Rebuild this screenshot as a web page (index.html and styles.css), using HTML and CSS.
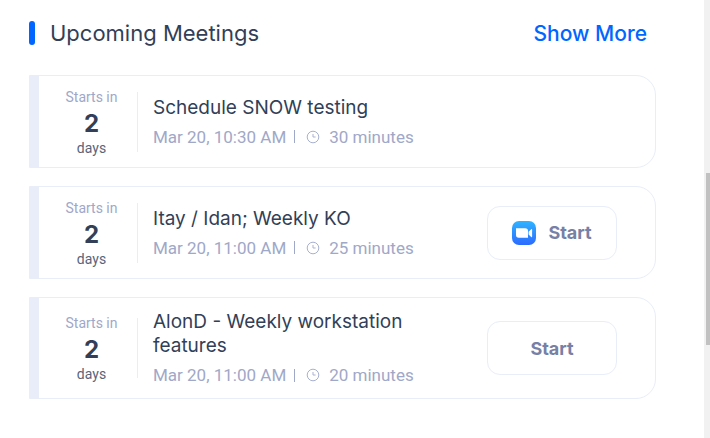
FILE: index.html
```html
<!DOCTYPE html>
<html lang="en">
<head>
  <meta charset="UTF-8">
  <meta name="viewport" content="width=device-width, initial-scale=1.0">
  <title>Upcoming Meetings</title>
  <link rel="stylesheet" href="styles.css">
</head>
<body>
  <main class="meetings">
    <header class="meetings-header">
      <h1>Upcoming Meetings</h1>
      <a href="#" class="show-more">Show More</a>
    </header>

    <article class="meeting">
      <div class="countdown">
        <span class="label">Starts in</span>
        <strong>2</strong>
        <span class="unit">days</span>
      </div>
      <div class="info">
        <h2>Schedule SNOW testing</h2>
        <p>
          <span>Mar 20, 10:30 AM</span>
          <i class="separator"></i>
          <svg class="clock" viewBox="0 0 14 14"><circle cx="7" cy="7" r="5.8"/><path d="M7 4v3h2.6"/></svg>
          <span>30 minutes</span>
        </p>
      </div>
    </article>

    <article class="meeting">
      <div class="countdown">
        <span class="label">Starts in</span>
        <strong>2</strong>
        <span class="unit">days</span>
      </div>
      <div class="info">
        <h2>Itay / Idan; Weekly KO</h2>
        <p>
          <span>Mar 20, 11:00 AM</span>
          <i class="separator"></i>
          <svg class="clock" viewBox="0 0 14 14"><circle cx="7" cy="7" r="5.8"/><path d="M7 4v3h2.6"/></svg>
          <span>25 minutes</span>
        </p>
      </div>
      <button type="button" class="start">
        <svg class="zoom" viewBox="0 0 24 24">
          <defs>
            <linearGradient id="zoom-bg" x1="0" y1="0" x2="0" y2="1">
              <stop offset="0" stop-color="#2fb4ff"/>
              <stop offset="1" stop-color="#2b6bff"/>
            </linearGradient>
          </defs>
          <rect width="24" height="24" rx="7" fill="url(#zoom-bg)"/>
          <path fill="#fff" d="M4 7.200h9.200q2.800 0 2.800 2.800v6.800H6.800Q4 16.800 4 14z"/>
          <path fill="#fff" d="M16.600 10.800l2.600-2.500q.9-.7.900.400v6.800q0 1.100-.9.400l-2.600-2.500z"/>
        </svg>
        Start
      </button>
    </article>

    <article class="meeting">
      <div class="countdown">
        <span class="label">Starts in</span>
        <strong>2</strong>
        <span class="unit">days</span>
      </div>
      <div class="info">
        <h2>AlonD - Weekly workstation features</h2>
        <p>
          <span>Mar 20, 11:00 AM</span>
          <i class="separator"></i>
          <svg class="clock" viewBox="0 0 14 14"><circle cx="7" cy="7" r="5.8"/><path d="M7 4v3h2.6"/></svg>
          <span>20 minutes</span>
        </p>
      </div>
      <button type="button" class="start">Start</button>
    </article>
  </main>

  <div class="scrollbar">
    <div class="thumb"></div>
  </div>
</body>
</html>
```
FILE: styles.css
```css
* {
  box-sizing: border-box;
}

body {
  margin: 0;
  min-height: 100vh;
  display: grid;
  grid-template-columns: 1fr 6px;
  background-color: #fff;
  color: #323f57; /* Dark slate text */
  font-family: Inter, "Open Sans", sans-serif;
}

h1,
h2,
p {
  margin: 0;
  font-weight: 400;
}

.meetings {
  display: flex;
  flex-direction: column;
  gap: 18px;
  padding: 16px 48px 16px 29px;
}

.meetings-header {
  display: flex;
  justify-content: space-between;
  align-items: center;
  height: 34px;
  margin-bottom: 7px;
  padding-right: 9px;
}

.meetings-header h1 {
  display: flex;
  align-items: center;
  gap: 15px;
  font-size: 22px;
}

.meetings-header h1::before {
  content: "";
  width: 6px;
  height: 24px;
  border-radius: 3px;
  background-color: #0066ff; /* Blue marker */
}

.show-more {
  color: #0066ff;
  font-size: 21px;
  font-weight: 500;
  text-decoration: none;
}

.meeting {
  display: flex;
  align-items: center;
  min-height: 93px;
  padding: 12px 38px 12px 0;
  border: 1px solid #e8edf8;
  border-radius: 0 20px 20px 0;
  background: linear-gradient(#e8edf9, #e8edf9) left / 9px 100% no-repeat;
}

.countdown {
  display: flex;
  flex-direction: column;
  align-items: center;
  justify-content: center;
  flex: none;
  width: 108px;
  height: 60px;
  padding: 0 0 2px 16px;
  border-right: 1px solid #e8edf8;
  font-family: Roboto, sans-serif;
  font-size: 14px;
}

.label {
  color: #a0a8c8;
  line-height: 22px;
}

.countdown strong {
  font-family: Inter, sans-serif;
  font-size: 24px;
  line-height: 32px;
}

.unit {
  color: #59647a;
  line-height: 16px;
}

.info {
  flex: 1;
  padding: 0 24px 0 15px;
}

.info h2 {
  font-size: 19px;
  line-height: 24px;
}

.info p {
  display: flex;
  align-items: center;
  margin-top: 6px;
  color: #a0a8c8;
  font-family: Roboto, sans-serif;
  font-size: 17px;
  line-height: 22px;
}

.separator {
  width: 1px;
  height: 13px;
  margin: 0 11px 0 8px;
  background-color: #a0a8c8;
}

.clock {
  width: 14px;
  height: 14px;
  margin-right: 9px;
  fill: none;
  stroke: #a9b1d0;
}

.start {
  display: flex;
  align-items: center;
  justify-content: center;
  gap: 12px;
  flex: none;
  width: 130px;
  height: 54px;
  border: 1px solid #e8edf8;
  border-radius: 13px;
  background-color: #fff;
  color: #7780a5;
  font-family: inherit;
  font-size: 18px;
  font-weight: 700;
  cursor: pointer;
}

.zoom {
  width: 24px;
  height: 24px;
}

/* Page scroll track */
.scrollbar {
  display: grid;
  grid-template-rows: 173fr 172fr 93fr;
  padding-left: 2px;
  background-color: #f1f1f1;
}

.thumb {
  grid-row: 2;
  background-color: #c1c1c1;
}
```
